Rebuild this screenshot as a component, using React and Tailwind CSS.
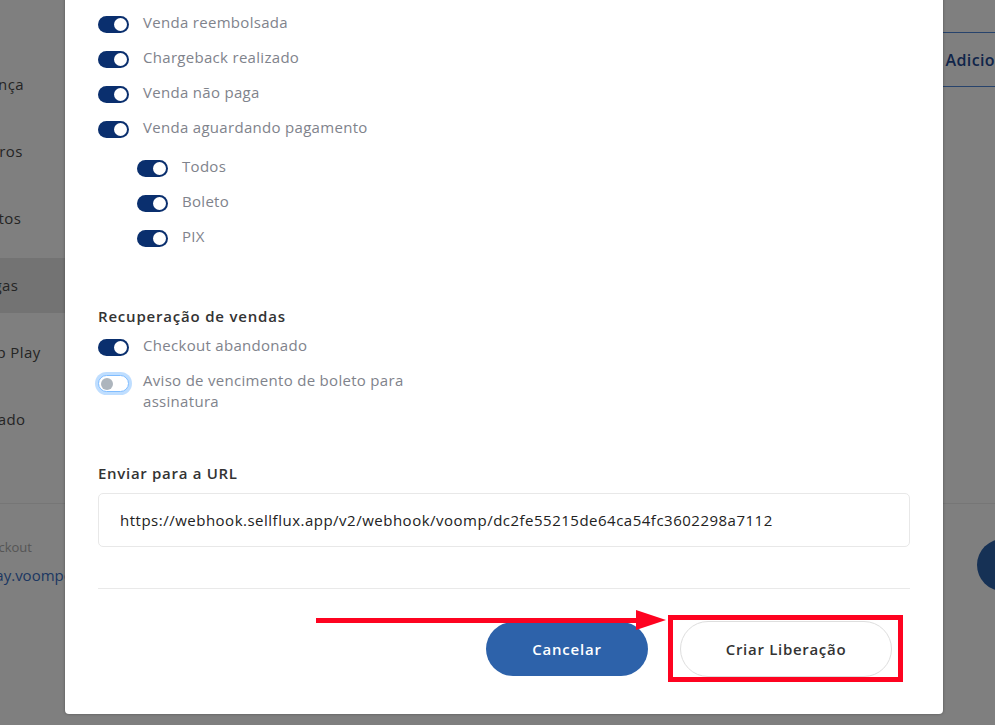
import React from 'react'

const sidebarItems = [
  { label: 'Cobrança', active: false },
  { label: 'Parceiros', active: false },
  { label: 'Produtos', active: false },
  { label: 'Entregas', active: true },
  { label: 'Voomp Play', active: false },
  { label: 'Avançado', active: false },
]

const events = [
  'Venda reembolsada',
  'Chargeback realizado',
  'Venda não paga',
  'Venda aguardando pagamento',
]

const paymentMethods = ['Todos', 'Boleto', 'PIX']

// Small switch, checked = navy track with knob on the right
const Switch = ({ on }) =>
  on ? (
    <span className="mt-[4px] flex h-[17px] w-[31px] shrink-0 items-center justify-end rounded-full bg-[#0a2f6e] px-[2px]">
      <span className="h-[13px] w-[13px] rounded-full bg-white" />
    </span>
  ) : (
    <span className="mt-[5px] flex h-[17px] w-[31px] shrink-0 items-center rounded-full border border-[#80bdff] bg-white px-[2px] shadow-[0_0_0_3px_rgba(0,123,255,0.25)]">
      <span className="h-[12px] w-[12px] rounded-full bg-[#adb5bd]" />
    </span>
  )

const SwitchRow = ({ on = true, children }) => (
  <div className="flex items-start gap-[14px]">
    <Switch on={on} />
    <span className="max-w-[280px] text-[15px] leading-[21px] tracking-[0.3px] text-[#7f838c]">{children}</span>
  </div>
)

export default function App() {
  return (
    <div className="relative h-[725px] w-full overflow-hidden bg-white font-['Open_Sans',sans-serif]">
      {/* Page behind the modal */}
      <div className="flex h-full flex-col">
        <div className="flex h-[504px] shrink-0 border-b border-[#ececec]">
          <aside className="w-[65px] shrink-0 overflow-hidden">
            <nav className="-ml-[46px] flex w-[220px] flex-col gap-[12px] pt-[57px]">
              {sidebarItems.map((item) => (
                <div
                  key={item.label}
                  className={`flex h-[55px] items-center whitespace-nowrap text-[15px] font-medium tracking-[0.4px] text-[#4a4a4a] ${
                    item.active ? 'bg-[#e6e6e6]' : ''
                  }`}
                >
                  {item.label}
                </div>
              ))}
            </nav>
          </aside>
          <main className="flex flex-1 justify-end overflow-hidden pt-[32px]">
            <button className="-mr-[132px] flex h-[55px] items-center whitespace-nowrap border border-[#4f86d8] pl-[22px] pr-[24px] text-[16px] font-semibold tracking-[0.4px] text-[#1f4a94]">
              Adicionar liberação
            </button>
          </main>
        </div>
        <div className="flex flex-col gap-[6px] overflow-hidden pt-[34px]">
          <span className="-ml-[25px] whitespace-nowrap text-[13px] text-[#ababab]">Checkout</span>
          <span className="-ml-[65px] whitespace-nowrap text-[15px] text-[#3a6fc4]">
            https://pay.voompcreators.com.br/checkout
          </span>
        </div>
      </div>
      {/* Floating help button */}
      <span className="absolute right-[-34px] top-[539px] h-[52px] w-[52px] rounded-full bg-[#2d62aa]" />

      {/* Backdrop */}
      <div className="absolute inset-0 bg-black/50" />

      {/* Modal */}
      <div className="absolute left-[65px] top-[-40px] w-[878px] rounded-[4px] bg-white px-[33px] pb-[37px] pt-[52px] shadow-[0_0_3px_rgba(0,0,0,0.35)]">
        <div className="flex flex-col gap-[14px]">
          {events.map((e) => (
            <SwitchRow key={e}>{e}</SwitchRow>
          ))}
        </div>
        <div className="mt-[18px] flex flex-col gap-[14px] pl-[39px]">
          {paymentMethods.map((m) => (
            <SwitchRow key={m}>{m}</SwitchRow>
          ))}
        </div>

        <h3 className="mt-[59px] text-[15px] font-semibold leading-[21px] tracking-[0.8px] text-[#333]">
          Recuperação de vendas
        </h3>
        <div className="mt-[8px]">
          <SwitchRow>Checkout abandonado</SwitchRow>
        </div>
        <div className="mt-[14px]">
          <SwitchRow on={false}>Aviso de vencimento de boleto para assinatura</SwitchRow>
        </div>

        <h3 className="mt-[51px] text-[15px] font-semibold leading-[21px] tracking-[0.7px] text-[#333]">
          Enviar para a URL
        </h3>
        <div className="mt-[9px] flex h-[54px] items-center rounded-[5px] border border-[#e8e8e8] px-[21px] text-[15px] tracking-[0.5px] text-[#222]">
          https://webhook.sellflux.app/v2/webhook/voomp/dc2fe55215de64ca54fc3602298a7112
        </div>

        <div className="mt-[41px] border-t border-[#e9e9e9]" />

        <div className="mt-[32px] flex items-center justify-end gap-[32px] pr-[18px]">
          <button className="h-[54px] w-[162px] rounded-full bg-[#2d62aa] text-[15px] font-semibold tracking-[0.8px] text-white">
            Cancelar
          </button>
          <button className="h-[56px] w-[212px] rounded-full border border-[#dedede] bg-white text-[15px] font-semibold tracking-[0.7px] text-[#333]">
            Criar Liberação
          </button>
        </div>
      </div>

      {/* Red highlight: arrow + box around the submit button */}
      <svg className="absolute left-[316px] top-[608px]" width="352" height="26" viewBox="0 0 352 26">
        <rect x="0" y="10" width="324" height="5" fill="#fe0320" />
        <polygon points="320,2 350,12 320,22" fill="#fe0320" />
      </svg>
      <div className="absolute left-[668px] top-[615px] h-[67px] w-[235px] border-[5px] border-[#fe0320]" />
    </div>
  )
}
